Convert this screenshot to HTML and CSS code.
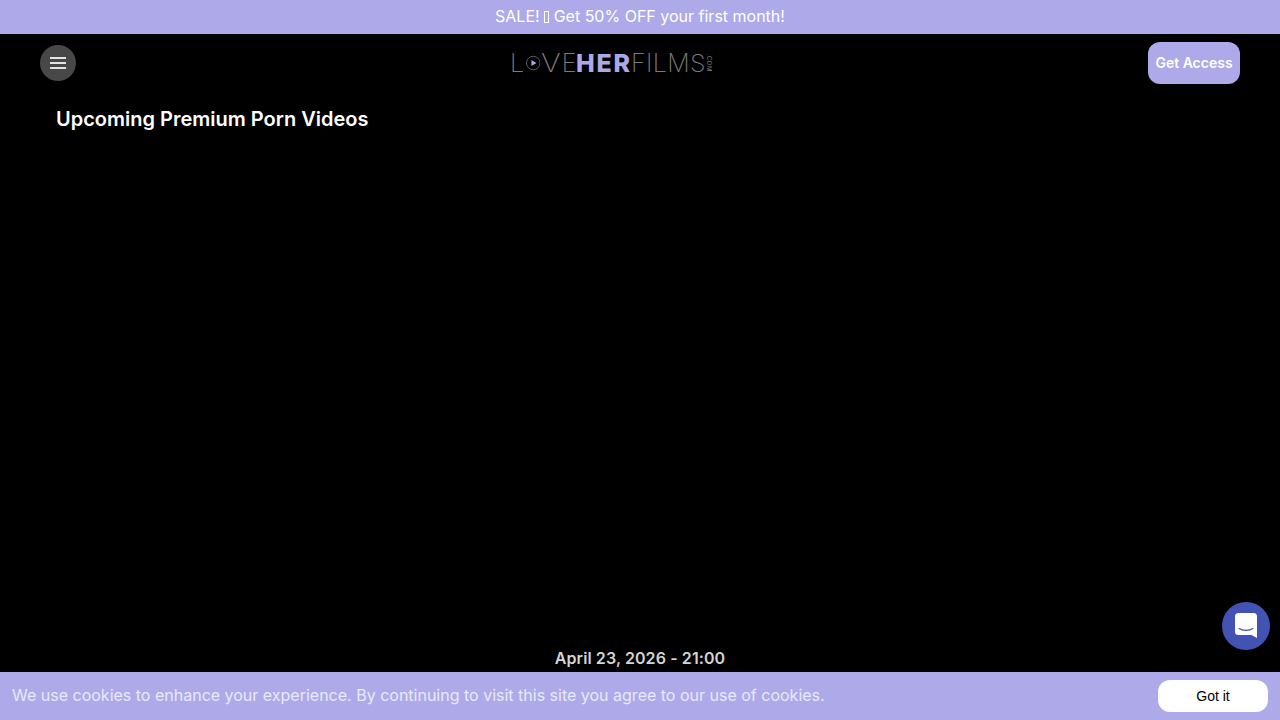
FILE: index.html
```html
<!DOCTYPE html>
<html lang="en">
<head>
    <meta charset="UTF-8">
    <meta name="viewport" content="width=device-width, initial-scale=1.0">
    <title>Upcoming Premium Porn Videos</title>
    <link rel="stylesheet" href="styles.css">
</head>
<body>
    <div class="promo-bar">SALE! <span class="missing-glyph"></span> Get 50% OFF your first month!</div>
    <header class="site-header">
        <button class="menu-button" aria-label="Menu">
            <span></span>
            <span></span>
            <span></span>
        </button>
        <a class="logo" href="#">
            <span class="logo-thin logo-first">L</span>
            <svg class="logo-play" viewBox="0 0 20 20" width="20" height="20">
                <circle cx="10" cy="10" r="9.3" fill="none" stroke="#8d8d8d" stroke-width="0.9"/>
                <path d="M7.5 5.8 L14.5 10 L7.5 14.2 Z" fill="#aeaaea"/>
            </svg>
            <span class="logo-thin logo-wide">V</span><span class="logo-thin">E</span><span class="logo-bold">HER</span><span class="logo-thin logo-last">FILMS</span>
            <span class="logo-com">.COM</span>
        </a>
        <a class="access-button" href="#">Get Access</a>
    </header>
    <main class="content">
        <h1>Upcoming Premium Porn Videos</h1>
        <div class="video-slot"></div>
        <p class="release-date">April 23, 2026 - 21:00</p>
    </main>
    <button class="chat-launcher" aria-label="Chat">
        <svg viewBox="0 0 22 25" width="22" height="25">
            <path fill="#fff" d="M3.5 0 H18.5 A3.5 3.5 0 0 1 22 3.5 V25 L16.5 22 H3.5 A3.5 3.5 0 0 1 0 18.5 V3.5 A3.5 3.5 0 0 1 3.5 0 Z"/>
            <path fill="none" stroke="#4353b3" stroke-width="1.1" stroke-linecap="round" d="M4 15.5 C8 18 14 18 18 15.5"/>
        </svg>
    </button>
    <div class="cookie-bar">
        <span>We use cookies to enhance your experience. By continuing to visit this site you agree to our use of cookies.</span>
        <button class="cookie-button">Got it</button>
    </div>
</body>
</html>
```

FILE: styles.css
```css
html, body {
    height: 100%;
}

body {
    margin: 0;
    background-color: #000;
    color: #fff;
    font-family: Inter, 'Noto Sans', sans-serif;
    overflow: hidden;
}

.promo-bar {
    height: 33px;
    padding-bottom: 1px;
    line-height: 33px;
    background-color: #aeaaea;
    text-align: center;
    font-size: 16px;
}

.missing-glyph {
    display: inline-block;
    width: 3px;
    height: 10px;
    border: 1px solid #fff;
    vertical-align: -1px;
}

.site-header {
    display: flex;
    align-items: center;
    justify-content: space-between;
    height: 58px;
    padding: 0 40px;
}

.menu-button {
    display: flex;
    flex-direction: column;
    align-items: center;
    justify-content: center;
    gap: 3px;
    width: 36px;
    height: 36px;
    padding: 0;
    border: none;
    border-radius: 50%;
    background-color: #484848;
}

.menu-button span {
    display: block;
    width: 16px;
    height: 2px;
    background-color: #e4e4e4;
}

.logo {
    display: flex;
    align-items: center;
    width: 200px;
    color: #7d7d7d;
    text-decoration: none;
    font-size: 25px;
    line-height: 1;
    opacity: 0.99;
}

.logo-thin {
    font-weight: 200;
    letter-spacing: 0.4px;
}

.logo-first {
    margin-left: -2px;
}

.logo-wide {
    margin: 0 4px 0 1px;
    transform: scaleX(1.2);
    transform-origin: left center;
}

.logo-bold {
    margin-left: -1px;
    color: #aeaaea;
    font-weight: 800;
    letter-spacing: 1.8px;
}

.logo-last {
    margin-left: -1px;
}

.logo-play {
    margin-left: 1px;
}

.logo-com {
    margin-left: auto;
    writing-mode: vertical-rl;
    font-size: 6px;
    letter-spacing: 0.5px;
    font-weight: 400;
}

.access-button {
    display: flex;
    align-items: center;
    justify-content: center;
    width: 92px;
    height: 42px;
    border-radius: 12px;
    background-color: #aeaaea;
    color: #fff;
    text-decoration: none;
    font-size: 14px;
    line-height: 40px;
    font-weight: 600;
}

.content {
    display: flex;
    flex-direction: column;
    padding: 0 56px;
}

h1 {
    margin: 14px 0 0;
    font-size: 20px;
    line-height: 26px;
    font-weight: 600;
}

.video-slot {
    height: 514px;
}

.release-date {
    margin: 0;
    color: #d4d4d4;
    text-align: center;
    font-size: 16px;
    letter-spacing: 0.1px;
    line-height: 24px;
    font-weight: 600;
}

.chat-launcher {
    position: fixed;
    right: 10px;
    bottom: 70px;
    display: flex;
    align-items: center;
    justify-content: center;
    width: 48px;
    height: 48px;
    padding: 0 0 2px;
    border: none;
    border-radius: 50%;
    background-color: #4353b3;
}

.cookie-bar {
    position: fixed;
    left: 0;
    right: 0;
    bottom: 0;
    display: flex;
    align-items: center;
    justify-content: space-between;
    height: 48px;
    padding: 0 12px;
    background-color: #aeaaea;
    font-size: 16px;
}

.cookie-bar > span {
    padding-bottom: 2px;
    color: #e8e8f6;
}

.cookie-button {
    width: 110px;
    height: 32px;
    border: none;
    border-radius: 12px;
    background-color: #fff;
    color: #000;
    font-family: 'Liberation Sans', Arial, sans-serif;
    font-size: 14px;
}
```
